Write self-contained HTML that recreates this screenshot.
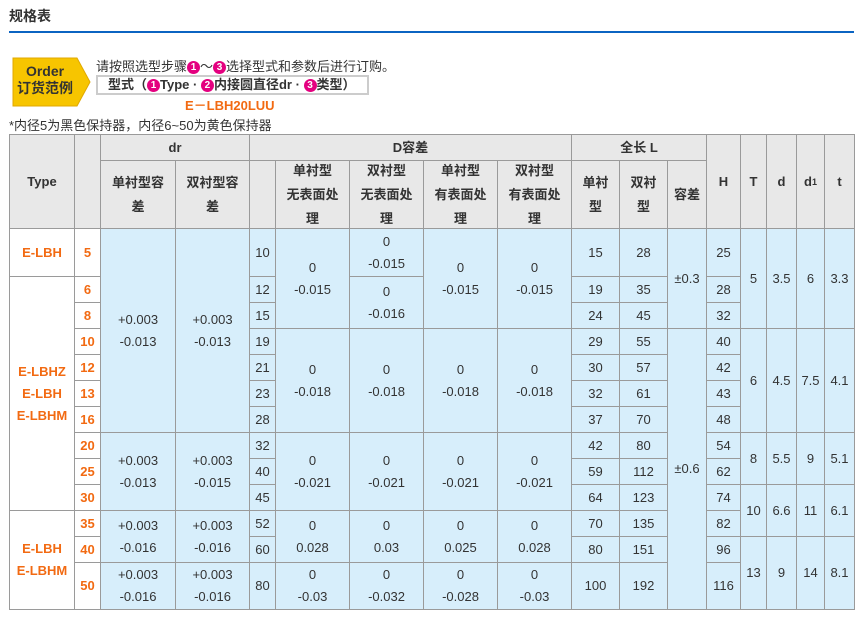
<!DOCTYPE html>
<html><head><meta charset="utf-8"><style>
*{margin:0;padding:0;box-sizing:border-box}
body{width:868px;height:621px;background:#fff;font-family:"Liberation Sans","Noto Sans CJK SC",sans-serif;color:#333;position:relative;overflow:hidden}
.c{position:absolute;border:1px solid #9a9a9a;display:flex;align-items:center;justify-content:center;text-align:center;font-size:13px;line-height:22px;background:#d7eefb}
.h{background:#e8e8e8;font-weight:bold;font-size:13px;line-height:24px}
.w{background:#fff;color:#f26a12;font-weight:bold}
.n{display:inline-block;width:13px;height:13px;border-radius:50%;background:#e4007f;color:#fff;font-size:10px;line-height:13px;text-align:center;font-weight:bold;vertical-align:1px}
</style></head><body>
<div style="position:absolute;left:9px;top:6px;font-size:14px;font-weight:bold;color:#333">规格表</div>
<div style="position:absolute;left:9px;top:31px;width:845px;height:2px;background:#0b64c2"></div>
<svg style="position:absolute;left:11px;top:56px" width="80" height="52"><polygon points="2,2 66,2 79,26 66,50 2,50" fill="#f7c500" stroke="#e0a800"/></svg>
<div style="position:absolute;left:12px;top:63px;width:66px;text-align:center;font-size:14px;font-weight:bold;line-height:17px;color:#333">Order<br>订货范例</div>
<div style="position:absolute;left:96px;top:56px;font-size:13px;color:#333">请按照选型步骤<span class="n">1</span>～<span class="n">3</span>选择型式和参数后进行订购。</div>
<div style="position:absolute;left:96px;top:75px;width:273px;height:20px;border:2px solid #ccc;background:#fff;font-size:13px;line-height:16px;padding-left:10px;color:#333;font-weight:bold">型式（<span class="n">1</span>Type · <span class="n">2</span>内接圆直径dr · <span class="n">3</span>类型）</div>
<div style="position:absolute;left:185px;top:95px;font-size:13px;font-weight:bold;color:#f26a12">E－LBH20LUU</div>
<div style="position:absolute;left:9px;top:115px;font-size:13px;color:#333">*内径5为黑色保持器，内径6~50为黄色保持器</div>
<div id="t"></div>
<script>
var X=[9,74,100,175,249,275,349,423,497,571,619,667,706,740,766,796,824,854];
var Y=[134,160,228,276,302,328,354,380,406,432,458,484,510,536,562,609];
var out='';
function c(c1,c2,y1,y2,txt,cls){
 var l=X[c1],r=X[c2],t=Y[y1],b=Y[y2];
 out+='<div class="c '+(cls||'')+'" style="left:'+l+'px;top:'+t+'px;width:'+(r-l+1)+'px;height:'+(b-t+1)+'px">'+txt+'</div>';
}
c(0,1,0,2,'Type','h');c(1,2,0,2,'','h');
c(2,4,0,1,'dr','h');c(2,3,1,2,'单衬型容<br>差','h');c(3,4,1,2,'双衬型容<br>差','h');
c(4,9,0,1,'D容差','h');c(4,5,1,2,'','h');
c(5,6,1,2,'单衬型<br>无表面处<br>理','h');c(6,7,1,2,'双衬型<br>无表面处<br>理','h');
c(7,8,1,2,'单衬型<br>有表面处<br>理','h');c(8,9,1,2,'双衬型<br>有表面处<br>理','h');
c(9,12,0,1,'全长 L','h');c(9,10,1,2,'单衬<br>型','h');c(10,11,1,2,'双衬<br>型','h');c(11,12,1,2,'容差','h');
c(12,13,0,2,'H','h');c(13,14,0,2,'T','h');c(14,15,0,2,'d','h');c(15,16,0,2,'d<sub style="font-size:9px">1</sub>','h');c(16,17,0,2,'t','h');
c(0,1,2,3,'E-LBH','w');c(0,1,3,12,'E-LBHZ<br>E-LBH<br>E-LBHM','w');c(0,1,12,15,'E-LBH<br>E-LBHM','w');
var nums=['5','6','8','10','12','13','16','20','25','30','35','40','50'];
var Dn=['10','12','15','19','21','23','28','32','40','45','52','60','80'];
var L1=['15','19','24','29','30','32','37','42','59','64','70','80','100'];
var L2=['28','35','45','55','57','61','70','80','112','123','135','151','192'];
var H=['25','28','32','40','42','43','48','54','62','74','82','96','116'];
for(var i=0;i<13;i++){var r=i+2;
 c(1,2,r,r+1,nums[i],'w');c(4,5,r,r+1,Dn[i]);c(9,10,r,r+1,L1[i]);c(10,11,r,r+1,L2[i]);c(12,13,r,r+1,H[i]);}
c(2,3,2,9,'+0.003<br>-0.013');c(3,4,2,9,'+0.003<br>-0.013');
c(2,3,9,12,'+0.003<br>-0.013');c(3,4,9,12,'+0.003<br>-0.015');
c(2,3,12,14,'+0.003<br>-0.016');c(3,4,12,14,'+0.003<br>-0.016');
c(2,3,14,15,'+0.003<br>-0.016');c(3,4,14,15,'+0.003<br>-0.016');
c(5,6,2,5,'0<br>-0.015');c(5,6,5,9,'0<br>-0.018');
c(6,7,2,3,'0<br>-0.015');c(6,7,3,5,'0<br>-0.016');c(6,7,5,9,'0<br>-0.018');
c(7,8,2,5,'0<br>-0.015');c(7,8,5,9,'0<br>-0.018');
c(8,9,2,5,'0<br>-0.015');c(8,9,5,9,'0<br>-0.018');
var r3=[['-0.021','-0.021','-0.021','-0.021'],['0.028','0.03','0.025','0.028'],['-0.03','-0.032','-0.028','-0.03']];
var rr=[[9,12],[12,14],[14,15]];
for(var k=0;k<3;k++)for(var j=0;j<4;j++)c(5+j,6+j,rr[k][0],rr[k][1],'0<br>'+r3[k][j]);
c(11,12,2,5,'±0.3');c(11,12,5,15,'±0.6');
var T=[[2,5,'5','3.5','6','3.3'],[5,9,'6','4.5','7.5','4.1'],[9,11,'8','5.5','9','5.1'],[11,13,'10','6.6','11','6.1'],[13,15,'13','9','14','8.1']];
T.forEach(function(a){for(var j=0;j<4;j++)c(13+j,14+j,a[0],a[1],a[2+j]);});
document.getElementById('t').outerHTML=out;
</script>
</body></html>
